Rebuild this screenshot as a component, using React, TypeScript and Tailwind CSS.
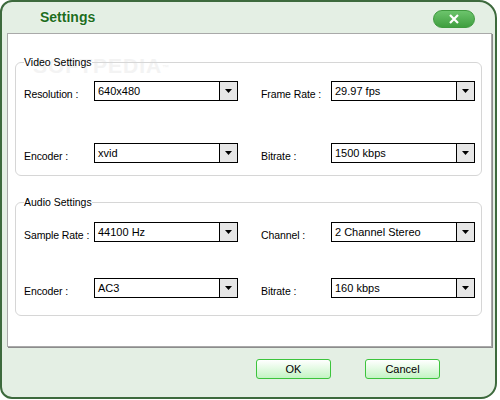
import { useState } from 'react';

type Row = { label: string; value: string };

const font = { fontFamily: '"Liberation Sans", Arial, sans-serif' };

function Select({ value }: { value: string }) {
  return (
    <div className="flex h-[20px] w-[144px] border border-black bg-white">
      <div className="flex-1 pl-[3px] text-[11px] leading-[18px] text-black">{value}</div>
      <div className="flex w-[18px] items-center justify-center border-l border-black bg-[#e6e6e6]">
        <svg width="7" height="4" viewBox="0 0 7 4">
          <path d="M0 0h7L3.5 4z" fill="#000" />
        </svg>
      </div>
    </div>
  );
}

function Field({ row }: { row: Row }) {
  return (
    <div className="flex items-start">
      <div className="w-[70px] pt-[7px] text-[10.5px] leading-[13px] tracking-[-0.1px] text-black">{row.label}</div>
      <Select value={row.value} />
    </div>
  );
}

function Group({
  title,
  rows,
  className,
  firstGap,
  rowGap,
}: {
  title: string;
  rows: Row[][];
  className: string;
  firstGap: string;
  rowGap: string;
}) {
  return (
    <fieldset className={`ml-[7px] w-[467px] rounded-[6px] border border-[#d6d6d6] pl-[8px] pr-[6px] ${className}`}>
      <legend className="px-0 text-[10.5px] leading-[13px] text-black">{title}</legend>
      <div className={`flex flex-col ${firstGap} ${rowGap}`}>
        {rows.map((pair, i) => (
          <div key={i} className="flex gap-[23px]">
            {pair.map((row) => (
              <Field key={row.label} row={row} />
            ))}
          </div>
        ))}
      </div>
    </fieldset>
  );
}

export default function App() {
  const [open, setOpen] = useState(true);

  const video: Row[][] = [
    [
      { label: 'Resolution :', value: '640x480' },
      { label: 'Frame Rate :', value: '29.97 fps' },
    ],
    [
      { label: 'Encoder :', value: 'xvid' },
      { label: 'Bitrate :', value: '1500 kbps' },
    ],
  ];

  const audio: Row[][] = [
    [
      { label: 'Sample Rate :', value: '44100 Hz' },
      { label: 'Channel :', value: '2 Channel Stereo' },
    ],
    [
      { label: 'Encoder :', value: 'AC3' },
      { label: 'Bitrate :', value: '160 kbps' },
    ],
  ];

  if (!open) return <div className="h-[400px] w-[500px] bg-white" />;

  return (
    <div className="h-[400px] w-[500px] bg-white" style={font}>
      <div className="flex h-[399px] w-[497px] flex-col rounded-tl-[12px] rounded-tr-[18px] rounded-br-[16px] rounded-bl-[12px] border-2 border-[#3d6a3d] bg-[#e4efe4]">
        {/* Title bar */}
        <div className="flex h-[31px] items-center justify-between pl-[38px] pr-[20px]">
          <span className="text-[14px] font-bold text-[#1d6e1d] [text-shadow:0_0_2px_#ffffff]">Settings</span>
          <button
            onClick={() => setOpen(false)}
            className="mt-[2px] flex h-[18px] w-[42px] items-center justify-center rounded-full border border-[#3f9a3f] bg-gradient-to-b from-[#6cc46c] to-[#3f9f3f]"
          >
            <svg width="10" height="10" viewBox="0 0 10 10">
              <path d="M1 1l8 8M9 1L1 9" stroke="#fff" strokeWidth="2.2" />
            </svg>
          </button>
        </div>

        {/* Content panel */}
        <div className="relative ml-[5px] h-[314px] w-[485px] border border-[#a9a9a9] bg-white pt-[22px] shadow-[1px_1px_0_#8c8c8c]">
          <div className="pointer-events-none absolute left-[25px] top-[16px] text-[21px] font-bold tracking-[1px] text-[#f3f3f3]">
            SOFTPEDIA<sup className="text-[7px]">™</sup>
          </div>
          <Group title="Video Settings" rows={video} className="relative h-[120px]" firstGap="pt-[12px]" rowGap="gap-[42px]" />
          <Group title="Audio Settings" rows={audio} className="relative mt-[20px] h-[120px]" firstGap="pt-[13px]" rowGap="gap-[36px]" />
        </div>

        {/* Footer */}
        <div className="flex flex-1 items-start justify-end gap-[34px] pr-[55px] pt-[12px]">
          <button className="h-[20px] w-[75px] rounded-[3px] border border-[#3cc43c] bg-gradient-to-b from-white to-[#c4f4c4] text-[11px] text-black">
            OK
          </button>
          <button className="h-[20px] w-[75px] rounded-[3px] border border-[#3cc43c] bg-gradient-to-b from-white to-[#c4f4c4] text-[11px] text-black">
            Cancel
          </button>
        </div>
      </div>
    </div>
  );
}
